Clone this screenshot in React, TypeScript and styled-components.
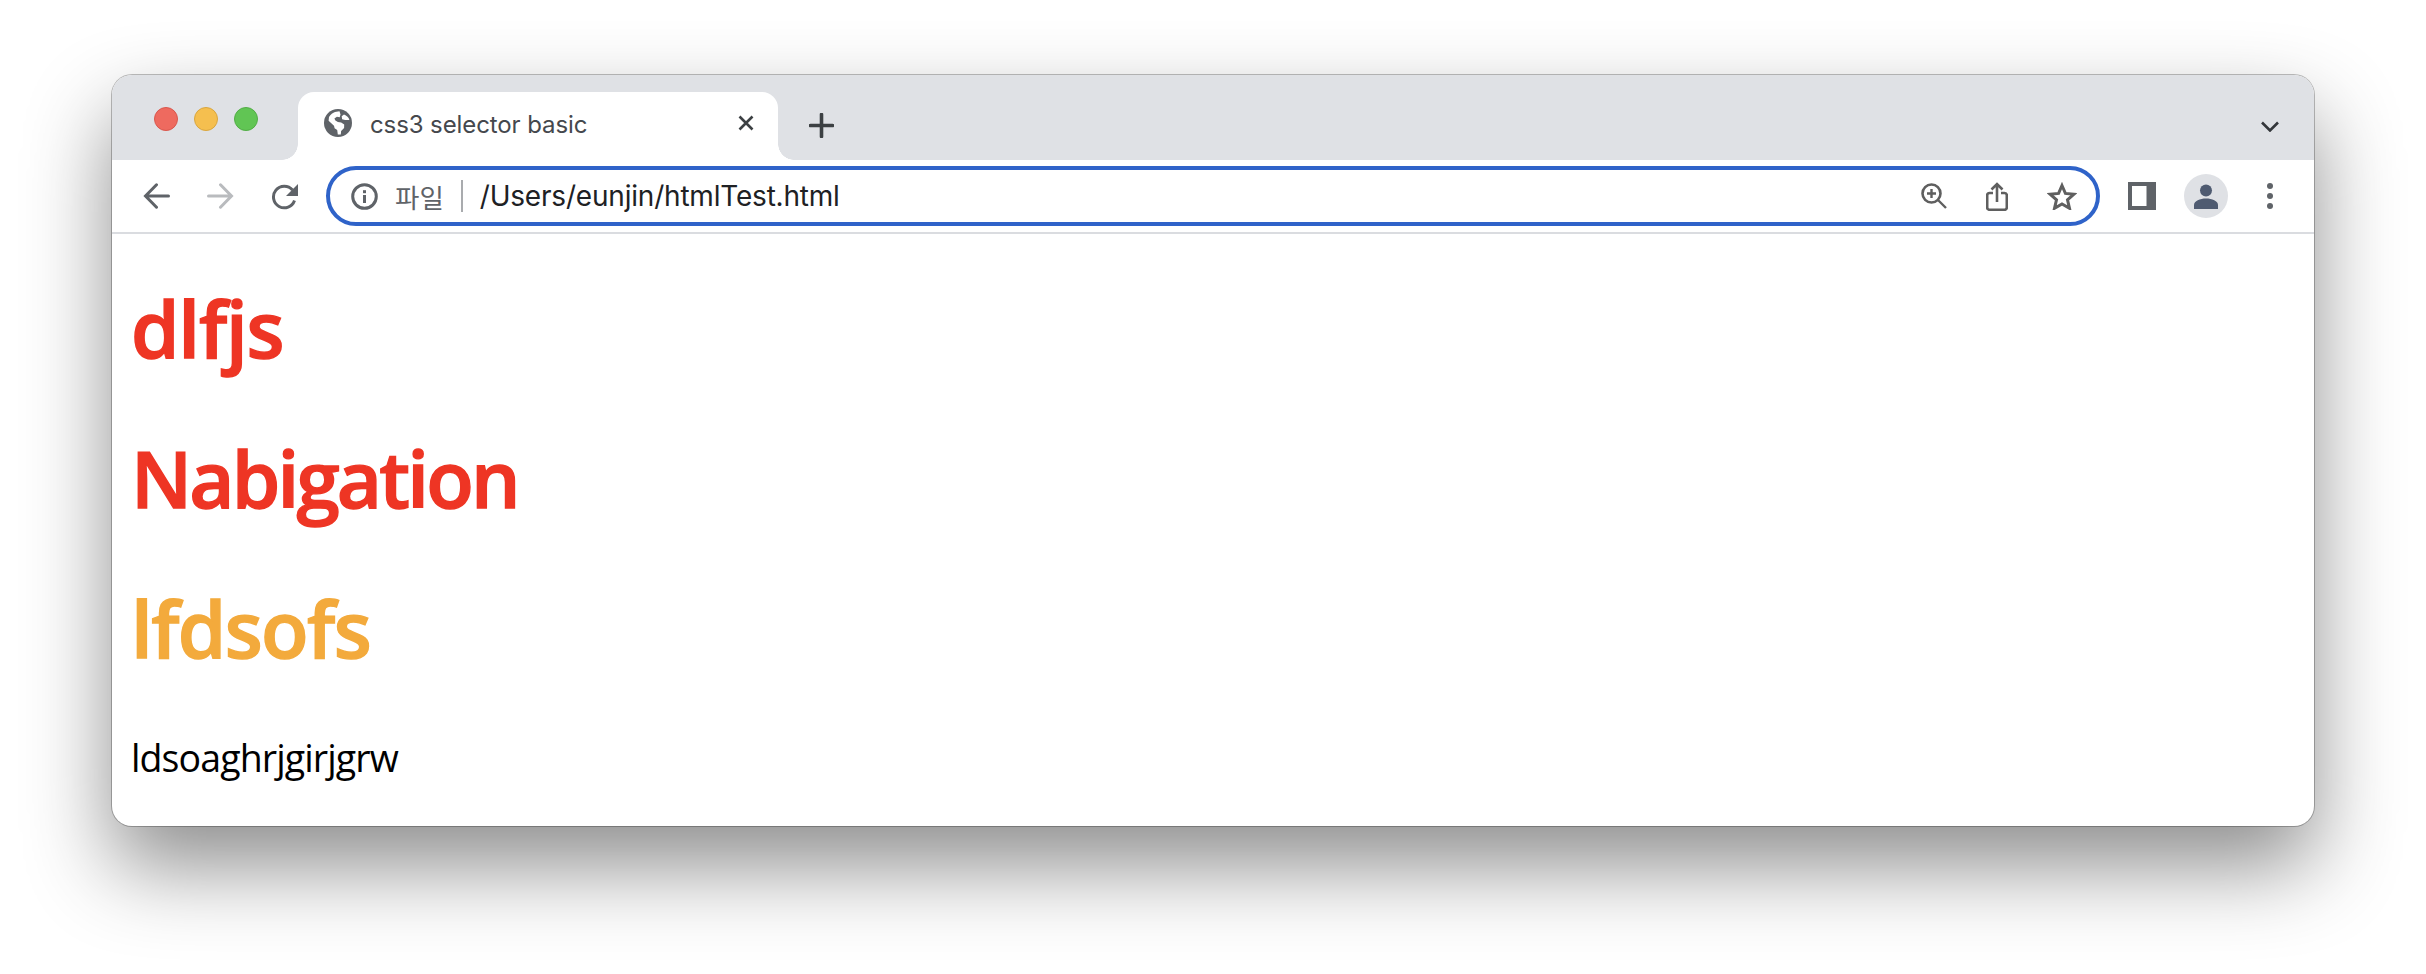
import React from "react";
import styled, { createGlobalStyle } from "styled-components";

const GlobalStyle = createGlobalStyle`
  html, body {
    margin: 0;
    background: #fff;
  }
`;

const Page = styled.div`
  width: 2426px;
  height: 974px;
  padding: 75px 112px 0;
  box-sizing: border-box;
  overflow: hidden;
`;

const Win = styled.div`
  height: 751px;
  border-radius: 20px;
  background: #fff;
  overflow: hidden;
  box-shadow: 0 0 0 1px rgba(0, 0, 0, 0.25), 0 40px 85px rgba(0, 0, 0, 0.45);
`;

const TabStrip = styled.div`
  height: 85px;
  background: #dfe1e5;
  display: flex;
  align-items: flex-end;
  padding: 0 35px 0 42px;
`;

const Lights = styled.div`
  display: flex;
  gap: 16px;
  align-self: flex-start;
  margin-top: 32px;
  width: 144px;
`;

const Light = styled.span<{ $fill: string; $edge: string }>`
  width: 24px;
  height: 24px;
  border-radius: 50%;
  box-sizing: border-box;
  background: ${(p) => p.$fill};
  border: 1px solid ${(p) => p.$edge};
`;

const Tab = styled.div`
  position: relative;
  width: 480px;
  height: 68px;
  background: #fff;
  border-radius: 16px 16px 0 0;
  display: flex;
  align-items: center;
  padding: 0 24px 6px 26px;
  box-sizing: border-box;

  &::before,
  &::after {
    content: "";
    position: absolute;
    bottom: 0;
    width: 16px;
    height: 16px;
  }
  &::before {
    left: -16px;
    background: radial-gradient(circle at 0 0, #dfe1e5 15.5px, #fff 16px);
  }
  &::after {
    right: -16px;
    background: radial-gradient(circle at 100% 0, #dfe1e5 15.5px, #fff 16px);
  }
`;

const TabTitle = styled.span`
  flex: 1;
  margin: 2px 0 0 18px;
  font: 400 24px "Inter", "Liberation Sans", sans-serif;
  color: #45484d;
  letter-spacing: -0.1px;
`;

const NewTab = styled.button`
  border: 0;
  background: none;
  padding: 0;
  margin: 0 0 22px 31px;
  display: flex;
`;

const Spacer = styled.div`
  flex: 1;
`;

const ListTabs = styled.div`
  display: flex;
  margin-bottom: 28px;
`;

const Toolbar = styled.div`
  height: 72px;
  display: flex;
  align-items: center;
  padding-left: 31px;
  border-bottom: 2px solid #dadce0;
`;

const NavGroup = styled.div`
  display: flex;
  gap: 37px;
  width: 183px;
`;

const Omnibox = styled.div`
  width: 1774px;
  height: 60px;
  box-sizing: border-box;
  border: 4px solid #2f63c9;
  border-radius: 30px;
  display: flex;
  align-items: center;
  padding: 0 19px 0 21px;
`;

const Scheme = styled.span`
  margin-left: 17px;
  font: 400 26.5px "Noto Sans CJK KR", sans-serif;
  color: #5f6368;
`;

const Divider = styled.span`
  width: 2px;
  height: 32px;
  margin: 0 17px;
  background: #a9abae;
`;

const Url = styled.span`
  flex: 1;
  font: 400 28px "Inter", "Liberation Sans", sans-serif;
  color: #202124;
  letter-spacing: -0.2px;
`;

const BoxIcons = styled.div`
  display: flex;
  align-items: center;
  gap: 39px;
`;

const Actions = styled.div`
  display: flex;
  align-items: center;
  margin-left: 28px;
`;

const Avatar = styled.div`
  width: 44px;
  height: 44px;
  margin: 0 39px 0 28px;
  border-radius: 50%;
  background: #dfe1e5;
  display: flex;
  align-items: center;
  justify-content: center;
`;

const Content = styled.main`
  padding: 19px 19px 0;
  font-family: "Open Sans", "Noto Sans", sans-serif;
`;

const Heading = styled.h1<{ $color: string; $tracking: number }>`
  margin: 0;
  height: 150px;
  line-height: 150px;
  font-size: 78px;
  font-weight: 600;
  -webkit-text-stroke: 1.4px ${(p) => p.$color};
  letter-spacing: ${(p) => p.$tracking}px;
  color: ${(p) => p.$color};
`;

const Body = styled.p`
  margin: 30px 0 0;
  font-size: 37.5px;
  line-height: 50px;
  letter-spacing: -0.9px;
  color: #000;
`;

const Globe = () => (
  <svg width="28" height="28" viewBox="0 0 28 28">
    <circle cx="14" cy="14" r="14" fill="#5f6368" />
    <path
      d="M11 3c-2 .7-4.500 2.500-6 5l-.4 3.800 5.400 5 .6 2.500 2.600 1.800.6 4.400c1 .2 2 .1 3-.1l.3-3.300 3-3 .1-3.500-3-2-3.300-.6-2.500-1.500-1-2 2.500-1.800 2.800.5.800-2.600-1-3.400z"
      fill="#fff"
    />
    <path d="M20 5.500l-2.300 1.700.4 3 3 .7 4.300.2c-.3-2.400-2.900-4.700-5.400-5.600z" fill="#fff" />
  </svg>
);

const CloseIcon = () => (
  <svg width="16" height="16" viewBox="0 0 16 16">
    <path d="M1.500 1.500l13 13M14.500 1.500l-13 13" stroke="#3c4043" strokeWidth="2.600" fill="none" />
  </svg>
);

const PlusIcon = () => (
  <svg width="25" height="25" viewBox="0 0 25 25">
    <path d="M12.500 1.500v22M1.500 12.500h22" stroke="#3c4043" strokeWidth="3.600" strokeLinecap="round" fill="none" />
  </svg>
);

const Chevron = () => (
  <svg width="18" height="11" viewBox="0 0 18 11">
    <path d="M1 1.500l8 8 8-8" stroke="#33363a" strokeWidth="2.600" fill="none" />
  </svg>
);

const Arrow = ({ color, flip }: { color: string; flip?: boolean }) => (
  <svg width="27" height="26" viewBox="0 0 27 26" style={flip ? { transform: "scaleX(-1)" } : undefined}>
    <path
      d="M25.500 13H3M13.500 1.800L2.500 13l11 11.200"
      stroke={color}
      strokeWidth="3"
      strokeLinecap="round"
      fill="none"
    />
  </svg>
);

const Reload = () => (
  <svg width="27" height="27" viewBox="0 0 27 27">
    <path d="M23.500 17.500a10.800 10.800 0 1 1-2-10.500" stroke="#5f6368" strokeWidth="3" fill="none" />
    <path d="M27 1v12H15z" fill="#5f6368" />
  </svg>
);

const InfoIcon = () => (
  <svg width="27" height="27" viewBox="0 0 27 27">
    <circle cx="13.500" cy="13.500" r="11.800" stroke="#5f6368" strokeWidth="3" fill="none" />
    <rect x="12" y="12" width="3" height="8" fill="#5f6368" />
    <rect x="12" y="7.200" width="3" height="3" fill="#5f6368" />
  </svg>
);

const ZoomIcon = () => (
  <svg width="26" height="26" viewBox="0 0 26 26">
    <circle cx="10.500" cy="10.500" r="9" stroke="#5f5f5f" strokeWidth="2.600" fill="none" />
    <path d="M17 17l8 8M10.500 6v9M6 10.500h9" stroke="#5f5f5f" strokeWidth="2.400" fill="none" />
  </svg>
);

const ShareIcon = () => (
  <svg width="22" height="29" viewBox="0 0 22 29">
    <path
      d="M7 11H3.500a2.300 2.300 0 0 0-2.300 2.300v12.200a2.300 2.300 0 0 0 2.300 2.300h15a2.300 2.300 0 0 0 2.300-2.300V13.300a2.300 2.300 0 0 0-2.300-2.300H15"
      stroke="#5f5f5f"
      strokeWidth="2.600"
      fill="none"
    />
    <path d="M11 20V2.500M5.500 7.500L11 2l5.500 5.500" stroke="#5f5f5f" strokeWidth="2.600" fill="none" />
  </svg>
);

const StarIcon = () => (
  <svg width="30" height="28" viewBox="0 0 30 28">
    <path
      d="M15 3.500l3.400 7.900 8.600.8-6.500 5.700 2 8.400L15 21.900l-7.500 4.400 2-8.400L3 12.200l8.600-.8z"
      stroke="#5f5f5f"
      strokeWidth="3"
      strokeLinejoin="miter"
      fill="none"
    />
  </svg>
);

const SidePanel = () => (
  <svg width="28" height="28" viewBox="0 0 28 28">
    <rect width="28" height="28" fill="#5f6368" />
    <rect x="4" y="4" width="14.500" height="20" fill="#fff" />
  </svg>
);

const Person = () => (
  <svg width="24" height="25" viewBox="0 0 24 25">
    <circle cx="12" cy="6.500" r="6" fill="#4f5b71" />
    <path d="M0 25v-4c0-4 6-6.500 12-6.500S24 17 24 21v4z" fill="#4f5b71" />
  </svg>
);

const Dots = () => (
  <svg width="6" height="26" viewBox="0 0 6 26">
    <circle cx="3" cy="3" r="3" fill="#5f6368" />
    <circle cx="3" cy="13" r="3" fill="#5f6368" />
    <circle cx="3" cy="23" r="3" fill="#5f6368" />
  </svg>
);

export default function App() {
  return (
    <Page>
      <GlobalStyle />
      <Win>
        <TabStrip>
          <Lights>
            <Light $fill="#ee6a5f" $edge="#d9574d" />
            <Light $fill="#f5bf4f" $edge="#d9a63f" />
            <Light $fill="#61c554" $edge="#52ad46" />
          </Lights>
          <Tab>
            <Globe />
            <TabTitle>css3 selector basic</TabTitle>
            <CloseIcon />
          </Tab>
          <NewTab>
            <PlusIcon />
          </NewTab>
          <Spacer />
          <ListTabs>
            <Chevron />
          </ListTabs>
        </TabStrip>
        <Toolbar>
          <NavGroup>
            <Arrow color="#5f6368" />
            <Arrow color="#b9bbbe" flip />
            <Reload />
          </NavGroup>
          <Omnibox>
            <InfoIcon />
            <Scheme>파일</Scheme>
            <Divider />
            <Url>/Users/eunjin/htmlTest.html</Url>
            <BoxIcons>
              <ZoomIcon />
              <ShareIcon />
              <StarIcon />
            </BoxIcons>
          </Omnibox>
          <Actions>
            <SidePanel />
            <Avatar>
              <Person />
            </Avatar>
            <Dots />
          </Actions>
        </Toolbar>
        <Content>
          <Heading $color="#ee3524" $tracking={-1.2}>dlfjs</Heading>
          <Heading $color="#ee3524" $tracking={-2.8}>Nabigation</Heading>
          <Heading $color="#f3aa3c" $tracking={-1.6}>lfdsofs</Heading>
          <Body>ldsoaghrjgirjgrw</Body>
        </Content>
      </Win>
    </Page>
  );
}
